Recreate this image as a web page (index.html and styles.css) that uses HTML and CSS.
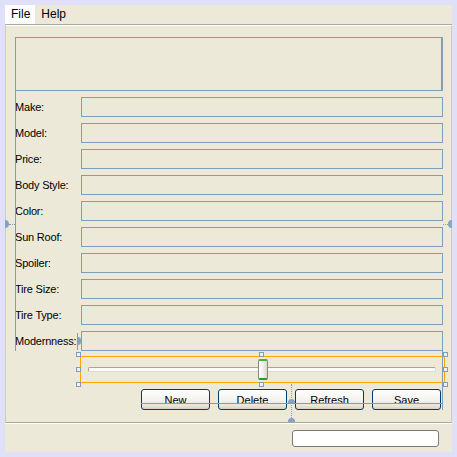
FILE: index.html
```html
<!DOCTYPE html>
<html>
<head>
<meta charset="utf-8">
<link rel="stylesheet" href="styles.css">
</head>
<body>
<div class="frame">
  <div class="menubar">
    <span class="menu active">File</span>
    <span class="menu">Help</span>
  </div>
  <div class="panel">
    <div class="textarea"></div>
    <div class="form">
      <span class="lbl">Make:</span><span class="field"></span>
      <span class="lbl">Model:</span><span class="field"></span>
      <span class="lbl">Price:</span><span class="field"></span>
      <span class="lbl">Body Style:</span><span class="field"></span>
      <span class="lbl">Color:</span><span class="field"></span>
      <span class="lbl">Sun Roof:</span><span class="field"></span>
      <span class="lbl">Spoiler:</span><span class="field"></span>
      <span class="lbl">Tire Size:</span><span class="field"></span>
      <span class="lbl">Tire Type:</span><span class="field"></span>
      <span class="lbl">Modernness:</span><span class="field"></span>
    </div>
    <div class="slider">
      <div class="track"></div>
      <div class="thumb"></div>
    </div>
    <div class="buttons">
      <button class="btn">New</button>
      <button class="btn">Delete</button>
      <button class="btn">Refresh</button>
      <button class="btn">Save</button>
    </div>
  </div>
  <div class="statusbar">
    <div class="status-field"></div>
  </div>

  <div class="guide g-label"></div>
  <div class="guide g-base"></div>
  <div class="guide g-right"></div>
  <div class="guide g-mod"></div>
  <div class="dots d-left"></div>
  <div class="dots d-right"></div>
  <div class="dots d-vert"></div>
  <div class="anchor a-left"></div>
  <div class="anchor a-right"></div>
  <div class="anchor a-mod"></div>
  <div class="anchor a-up1"></div>
  <div class="anchor a-up2"></div>

  <div class="handle h1"></div>
  <div class="handle h2"></div>
  <div class="handle h3"></div>
  <div class="handle h4"></div>
  <div class="handle h5"></div>
  <div class="handle h6"></div>
  <div class="handle h7"></div>
  <div class="handle h8"></div>
</div>
</body>
</html>
```

FILE: styles.css
```css
html, body {
  margin: 0;
  padding: 0;
}
body {
  padding: 5px;
  background: #e0e0f8;
  font-family: "Liberation Sans", Arial, sans-serif;
  font-size: 11px;
  color: #000;
}
.frame {
  position: relative;
  width: 447px;
  height: 447px;
  background: #ece9d8;
  display: flex;
  flex-direction: column;
}
.menubar {
  height: 19px;
  border-bottom: 1px solid #aca899;
  display: flex;
  flex: none;
}
.menu {
  line-height: 19px;
  padding: 0 5px 0 6px;
  font-size: 12px;
}
.menu.active {
  background: #fff;
}
.panel {
  flex: none;
  height: 385px;
  border-top: 1px solid #fff;
  border-bottom: 1px solid #aca899;
  border-left: 1px solid #cfccbc;
  border-right: 1px solid #cfccbc;
  padding: 11px 8px 0 9px;
  box-sizing: content-box;
  width: 428px;
}
.textarea {
  height: 54px;
  box-sizing: border-box;
  border: 1px solid #7f9db9;
  border-right-width: 2px;
}
.form {
  margin-top: 6px;
  display: grid;
  grid-template-columns: 66px 1fr;
  grid-auto-rows: 20px;
  row-gap: 6px;
}
.lbl {
  line-height: 20px;
  white-space: nowrap;
  letter-spacing: -0.2px;
}
.field {
  border: 1px solid #7f9db9;
  box-sizing: border-box;
}
.slider {
  position: relative;
  margin: 5px -2px 0 65px;
  height: 27px;
  box-sizing: border-box;
  border: 1px solid #ffa500;
}
.track {
  position: absolute;
  left: 7px;
  right: 8px;
  top: 10px;
  height: 5px;
  box-sizing: border-box;
  border: 1px solid #a8a69c;
  border-bottom-color: #dcdad0;
  border-right-color: #dcdad0;
  border-radius: 2px;
  background: #fbfbf8;
}
.thumb {
  position: absolute;
  left: 177px;
  top: 2px;
  width: 10px;
  height: 21px;
  box-sizing: border-box;
  border: 1px solid #8c8a80;
  border-top: 2px solid #3db83d;
  border-bottom: 2px solid #2a9e2a;
  border-radius: 2px;
  background: linear-gradient(90deg, #ffffff, #eeede6 60%, #d8d6cc);
}
.buttons {
  margin-top: 6px;
  display: flex;
  justify-content: flex-end;
  gap: 8px;
  padding-right: 2px;
}
.btn {
  width: 69px;
  height: 21px;
  margin: 0;
  padding: 0;
  border: 1px solid #003c74;
  border-radius: 3px;
  background: linear-gradient(#ffffff, #f4f3ee 50%, #e6e4da 85%, #d6d0c5);
  font-family: "Liberation Sans", Arial, sans-serif;
  font-size: 11px;
  color: #000;
}
.statusbar {
  flex: 1;
  border-top: 1px solid #fff;
  display: flex;
  justify-content: flex-end;
  padding: 6px 13px 0 0;
}
.status-field {
  width: 147px;
  height: 17px;
  box-sizing: border-box;
  border: 1px solid #7a7a7a;
  border-radius: 3px;
  background: #fff;
}

/* designer overlays (frame origin = page 5,5) */
.guide {
  position: absolute;
  background: #7f9db9;
}
.g-label { left: 10px; top: 86px; width: 1px; height: 260px; }
.g-base { left: 136px; top: 398px; width: 302px; height: 1px; }
.g-right { left: 437px; top: 346px; width: 1px; height: 59px; }
.g-mod { left: 72px; top: 328px; width: 1px; height: 17px; }
.dots {
  position: absolute;
}
.d-left { left: 4px; top: 219px; width: 6px; height: 0; border-top: 1px dotted #7f9db9; }
.d-right { left: 438px; top: 219px; width: 5px; height: 0; border-top: 1px dotted #7f9db9; }
.d-vert { left: 286px; top: 379px; width: 0; height: 36px; border-left: 1px dotted #8a9aaa; }
.anchor {
  position: absolute;
  background: #86a2c4;
}
.a-left { left: 0; top: 215px; width: 4px; height: 8px; border-radius: 0 4px 4px 0; }
.a-right { left: 443px; top: 215px; width: 4px; height: 8px; border-radius: 4px 0 0 4px; }
.a-mod { left: 73px; top: 332px; width: 3px; height: 8px; border-radius: 0 4px 4px 0; }
.a-up1 { left: 283px; top: 394px; width: 7px; height: 4px; border-radius: 4px 4px 0 0; }
.a-up2 { left: 283px; top: 413px; width: 7px; height: 4px; border-radius: 4px 4px 0 0; }
.handle {
  position: absolute;
  width: 5px;
  height: 5px;
  box-sizing: border-box;
  border: 1px solid #7f9db9;
  background: #eef2f8;
}
.h1 { left: 71px; top: 347px; }
.h2 { left: 254px; top: 347px; }
.h3 { left: 438px; top: 347px; }
.h4 { left: 71px; top: 362px; }
.h5 { left: 438px; top: 362px; }
.h6 { left: 71px; top: 377px; }
.h7 { left: 254px; top: 377px; }
.h8 { left: 438px; top: 377px; }
```
